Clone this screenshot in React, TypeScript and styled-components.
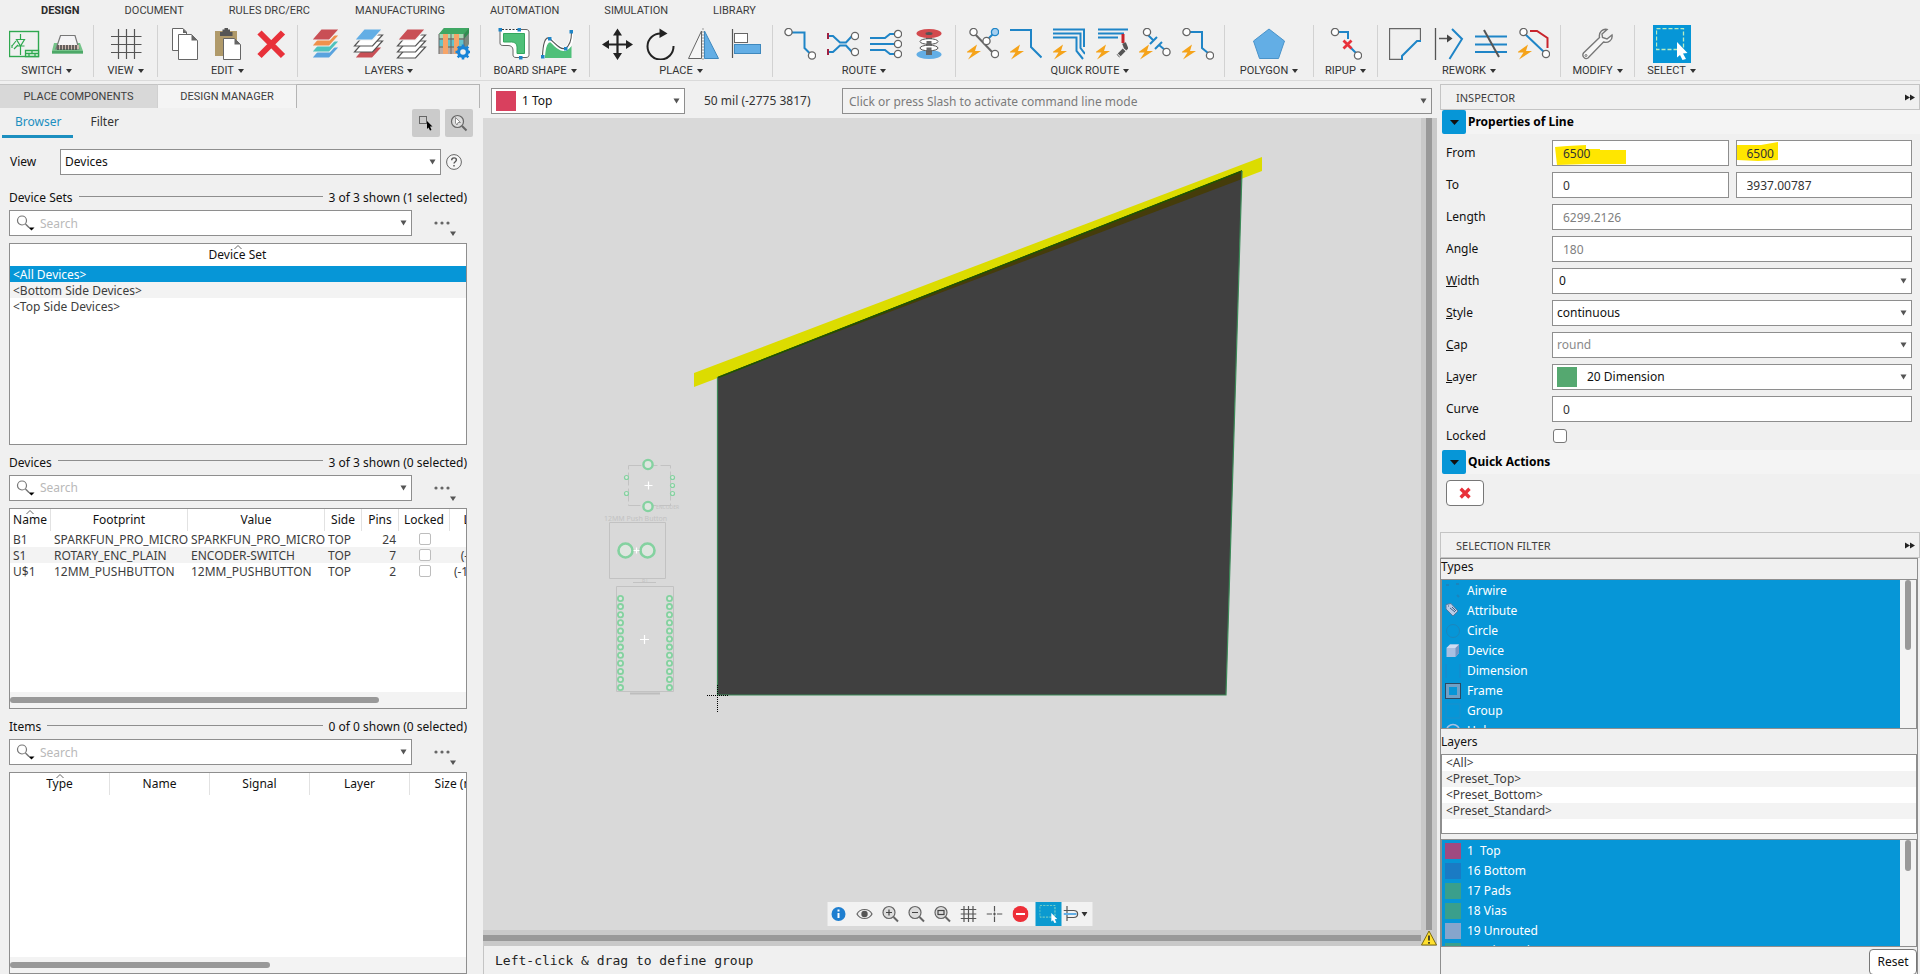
import React, { ReactNode } from "react";
import styled, { createGlobalStyle } from "styled-components";

const PANEL_FONT = '"Noto Sans", "Open Sans", sans-serif';
const CHROME_FONT = 'Roboto, "Liberation Sans", sans-serif';
const BLUE = "#0696d7";
const EDGE = "#8e8e8e";
const RULE = "#c4c4c4";
const TRACE = "#1f85c7";
const SKY = "#63aee5";
const GREEN = "#2fa84f";
const RED = "#e8313a";
const BOLT = "#f5a31a";
const PAPER = "#f0f0f0";

const GlobalStyle = createGlobalStyle`
  *, *::before, *::after { box-sizing: border-box; }
  body {
    margin: 0;
    background: ${PAPER};
    font: 12px/16px ${PANEL_FONT};
    color: #111;
  }
  button, input, select { font: inherit; color: inherit; }
  button { cursor: pointer; }
`;

/* ---------- page frame ---------- */

const Window = styled.div`
  display: flex;
  flex-direction: column;
  height: 100vh;
  overflow: hidden;
`;

const Workspace = styled.div`
  display: flex;
  flex: 1;
  min-height: 0;
  padding-top: 3px;
`;

/* ---------- menu and ribbon ---------- */

const MenuBar = styled.nav`
  display: flex;
  gap: 45px;
  height: 20px;
  padding: 2px 41px 0;
  align-items: center;
  font: 11px/14px ${CHROME_FONT};
`;

const MenuLink = styled.a<{ $active?: boolean }>`
  color: ${(p) => (p.$active ? "#2b2b2b" : "#3c3c3c")};
  font-weight: ${(p) => (p.$active ? 700 : 400)};
  text-decoration: none;
`;

const Ribbon = styled.div`
  display: flex;
  height: 61px;
  padding-top: 5px;
  border-bottom: 1px solid #dadada;
`;

const Group = styled.div<{ $width: number; $last?: boolean }>`
  display: flex;
  flex-direction: column;
  align-items: center;
  width: ${(p) => p.$width}px;
  height: 52px;
  border-right: 1px solid ${(p) => (p.$last ? "transparent" : "#d2d2d2")};
`;

const ToolRow = styled.div`
  display: flex;
  flex: none;
  gap: 11px;
  height: 38px;
  align-items: center;
`;

const ToolButton = styled.button`
  display: flex;
  width: 32px;
  height: 32px;
  padding: 0;
  border: 0;
  background: none;
`;

const SelectTool = styled(ToolButton)`
  width: 38px;
  height: 38px;
  background: ${BLUE};
  align-items: center;
  justify-content: center;
`;

const GroupMenu = styled.button`
  display: flex;
  flex: none;
  gap: 4px;
  align-items: center;
  padding: 1px 0 0;
  border: 0;
  background: none;
  color: #333;
  font: 11px/14px ${CHROME_FONT};
  white-space: nowrap;
`;

/* ---------- shared controls ---------- */

const Combo = styled.div<{ $fill?: string }>`
  position: relative;
  display: flex;
  flex: 1;
  align-items: center;
  height: 26px;
  min-width: 0;
  border: 1px solid ${EDGE};
  background: ${(p) => p.$fill ?? "#fff"};
`;

const ComboArrow = styled.svg`
  position: absolute;
  right: 4px;
  top: 9px;
  pointer-events: none;
`;

const BareSelect = styled.select<{ $pad?: number; $dim?: boolean }>`
  flex: 1;
  min-width: 0;
  height: 24px;
  padding: 0 16px 0 ${(p) => p.$pad ?? 4}px;
  border: 0;
  outline: 0;
  background: transparent;
  appearance: none;
  color: ${(p) => (p.$dim ? "#8a8a8a" : "#111")};
  opacity: 1;
`;

const BareInput = styled.input<{ $pad?: number; $dim?: boolean }>`
  position: relative;
  flex: 1;
  min-width: 0;
  height: 24px;
  padding: 0 4px 0 ${(p) => p.$pad ?? 10}px;
  border: 0;
  outline: 0;
  background: transparent;
  color: ${(p) => (p.$dim ? "#808080" : "#333")};
  &::placeholder { color: #b9b9b9; opacity: 1; }
`;

const CommandInput = styled(BareInput)`
  &::placeholder { color: #7b7b7b; }
`;

const Swatch = styled.span<{ $color: string; $size: number }>`
  flex: none;
  width: ${(p) => p.$size}px;
  height: ${(p) => p.$size}px;
  background: ${(p) => p.$color};
`;

const BoxSwatch = styled(Swatch)`
  margin-left: 4px;
`;

/* ---------- left panel ---------- */

const LeftPanel = styled.aside`
  display: flex;
  flex-direction: column;
  flex: none;
  width: 480px;
  min-height: 0;
`;

const DockTabs = styled.div`
  display: flex;
  flex: none;
  height: 24px;
`;

const DockTab = styled.button<{ $active?: boolean; $width: number }>`
  width: ${(p) => p.$width}px;
  padding: 0;
  border: 0;
  border-top: 1px solid ${RULE};
  border-right: 1px solid ${(p) => (p.$active ? "#b4b4b4" : "#d0d0d0")};
  background: ${(p) => (p.$active ? "#f4f4f4" : "#d8d8d8")};
  font: 11px/16px ${CHROME_FONT};
  color: #3e3e3e;
`;

const DockTail = styled.div`
  flex: 1;
  border-top: 1px solid #b4b4b4;
  border-right: 1px solid #b4b4b4;
`;

const SubTabs = styled.div`
  display: flex;
  flex: none;
  height: 30px;
  padding: 0 7px 0 2px;
  align-items: flex-start;
`;

const SubTab = styled.button<{ $active?: boolean }>`
  height: 30px;
  padding: 0 12px 0 13px;
  border: 0;
  border-bottom: 3px solid ${(p) => (p.$active ? "#1c8fc0" : "transparent")};
  background: none;
  color: ${(p) => (p.$active ? "#1c8fc0" : "#333")};
  & + & { margin-left: 4px; }
`;

const Spacer = styled.div`
  flex: 1;
`;

const SquareButton = styled.button`
  display: flex;
  align-items: center;
  justify-content: center;
  width: 28px;
  height: 28px;
  margin: 1px 0 0 5px;
  padding: 0;
  border: 0;
  border-radius: 2px;
  background: #cbcbcb;
`;

const ViewRow = styled.div`
  display: flex;
  flex: none;
  align-items: center;
  gap: 5px;
  height: 26px;
  margin: 11px 18px 5px 10px;
`;

const ViewLabel = styled.label`
  width: 45px;
`;

const HelpButton = styled.button`
  display: flex;
  padding: 0;
  border: 0;
  background: none;
`;

const Section = styled.section`
  display: flex;
  flex: 1;
  flex-direction: column;
  min-height: 0;
  padding: 10px 13px 0 9px;
`;

const SectionHead = styled.div`
  display: flex;
  flex: none;
  align-items: center;
  gap: 6px;
  height: 16px;
  margin: 0 0 4px;
`;

const SectionTitle = styled.h2`
  margin: 0;
  font-size: 12px;
  line-height: 16px;
  font-weight: 400;
`;

const HeadLine = styled.div`
  flex: 1;
  height: 1px;
  margin-bottom: 4px;
  background: ${EDGE};
`;

const SearchRow = styled.div`
  display: flex;
  flex: none;
  height: 26px;
  margin-bottom: 7px;
`;

const SearchIcon = styled.svg`
  flex: none;
  margin-left: 6px;
`;

const MoreButton = styled.button`
  display: flex;
  flex: none;
  width: 55px;
  padding: 0 0 0 20px;
  border: 0;
  background: none;
`;

const TableFrame = styled.div`
  display: flex;
  flex: 1;
  flex-direction: column;
  min-height: 0;
  overflow: hidden;
  border: 1px solid ${EDGE};
  background: #fff;
`;

const TableBody = styled.div`
  flex: 1;
  min-height: 0;
  overflow: hidden;
`;

const Table = styled.table<{ $width?: string }>`
  width: ${(p) => p.$width ?? "100%"};
  table-layout: fixed;
  border-collapse: separate;
  border-spacing: 0;
`;

const Th = styled.th<{ $divider?: boolean }>`
  position: relative;
  height: 22px;
  padding: 2px 0;
  border-right: 1px solid ${(p) => (p.$divider ? "#e2e2e2" : "transparent")};
  font-weight: 400;
  line-height: 18px;
  text-align: center;
  white-space: nowrap;
  overflow: hidden;
`;

const SortMark = styled.svg`
  position: absolute;
  top: 0;
  left: calc(50% - 4px);
`;

const Tr = styled.tr<{ $tone?: "selected" | "alt" }>`
  background: ${(p) => (p.$tone === "selected" ? BLUE : p.$tone === "alt" ? "#f3f3f3" : "#fff")};
  color: ${(p) => (p.$tone === "selected" ? "#fff" : "#3d3d3d")};
`;

const Td = styled.td<{ $align?: "right" | "center" }>`
  height: 16px;
  padding: 1px ${(p) => (p.$align === "right" ? 3 : 0)}px 0 ${(p) => (p.$align ? 0 : 3)}px;
  line-height: 15px;
  text-align: ${(p) => p.$align ?? "left"};
  white-space: nowrap;
  overflow: hidden;
`;

const TinyCheck = styled.input`
  display: block;
  width: 12px;
  height: 12px;
  margin: 1px auto 2px;
  border: 1px solid #bdbdbd;
  border-radius: 2px;
  background: #fff;
  appearance: none;
`;

const ScrollTrack = styled.div`
  flex: none;
  height: 16px;
  padding-top: 5px;
  background: #f3f3f3;
`;

const ScrollThumb = styled.div<{ $share: number }>`
  width: ${(p) => p.$share}%;
  height: 6px;
  border-radius: 3px;
  background: #999;
`;

/* ---------- center ---------- */

const Center = styled.main`
  display: flex;
  flex: 1;
  flex-direction: column;
  min-width: 0;
  margin-left: 3px;
`;

const CommandBar = styled.div`
  display: flex;
  flex: none;
  height: 34px;
  padding: 4px 5px 0 8px;
`;

const LayerPicker = styled.div`
  display: flex;
  width: 194px;
`;

const Coordinates = styled.output`
  width: 157px;
  padding-left: 19px;
  color: #333;
  line-height: 26px;
  white-space: nowrap;
`;

const CanvasGrid = styled.div`
  position: relative;
  display: grid;
  flex: 1;
  grid-template-columns: 1fr 16px;
  grid-template-rows: 1fr 16px;
  min-height: 0;
`;

const BoardCanvas = styled.svg`
  display: block;
  width: 100%;
  height: 100%;
  background: #d9d9d9;
`;

const VerticalBar = styled.div`
  padding: 0 5px;
  background: #c9c9c9;
`;

const HorizontalBar = styled.div`
  padding: 5px 0;
  background: #c9c9c9;
`;

const BarThumb = styled.div`
  height: 100%;
  background: #999;
`;

const WarningButton = styled.button`
  display: flex;
  padding: 0;
  border: 0;
  background: #c9c9c9;
`;

const FloatingTools = styled.div`
  position: absolute;
  left: 50%;
  bottom: 20px;
  display: flex;
  height: 24px;
  background: #f2f2f2;
  transform: translateX(-50%);
`;

const FloatButton = styled.button<{ $active?: boolean; $wide?: boolean }>`
  display: flex;
  align-items: center;
  justify-content: center;
  width: ${(p) => (p.$wide ? 31 : 26)}px;
  height: 24px;
  padding: 0 ${(p) => (p.$active ? 0 : 4)}px 0 0;
  border: 0;
  background: ${(p) => (p.$active ? "#0b9ad0" : "none")};
`;

const StatusBar = styled.footer`
  flex: none;
  height: 28px;
  padding: 7px 11px 5px;
  border-left: 1px solid ${RULE};
  color: #222;
  font: 13px/16px "DejaVu Sans Mono", "Liberation Mono", monospace;
`;

/* ---------- right panel ---------- */

const RightPanel = styled.aside`
  display: flex;
  flex: none;
  flex-direction: column;
  width: 483px;
  min-height: 0;
  padding-left: 3px;
`;

const PanelHead = styled.header`
  display: flex;
  flex: none;
  align-items: center;
  justify-content: space-between;
  height: 26px;
  padding: 2px 4px 0 15px;
  border: 1px solid ${RULE};
`;

const PanelTitle = styled.h2`
  margin: 0;
  font: 11px/16px ${PANEL_FONT};
  color: #3e3e3e;
`;

const CollapseButton = styled.button`
  display: flex;
  padding: 0 0 2px;
  border: 0;
  background: none;
`;

const Inspector = styled.div`
  display: flex;
  flex: none;
  flex-direction: column;
  height: 422px;
`;

const FoldHead = styled.div`
  display: flex;
  flex: none;
  align-items: center;
  gap: 2px;
  height: 24px;
  margin-left: 2px;
  background: #f4f4f4;
`;

const FoldButton = styled.button`
  display: flex;
  align-items: center;
  justify-content: center;
  width: 24px;
  height: 24px;
  padding: 0;
  border: 0;
  border-radius: 2px;
  background: ${BLUE};
`;

const FoldTitle = styled.h3`
  margin: 0;
  font-size: 12px;
  line-height: 16px;
  font-weight: 700;
  color: #000;
`;

const Form = styled.form`
  display: flex;
  flex-direction: column;
  gap: 6px;
  padding: 6px 8px 0 6px;
`;

const Field = styled.div`
  display: flex;
  align-items: center;
  gap: 7px;
  height: 26px;
`;

const CheckField = styled(Field)`
  height: 16px;
  margin-bottom: 6px;
`;

const FieldLabel = styled.label`
  width: 99px;
`;

const CheckBox = styled.input`
  width: 14px;
  height: 14px;
  margin: 0 0 0 1px;
  border: 1px solid #777;
  border-radius: 3px;
  background: #fff;
  appearance: none;
`;

const Marker = styled.svg`
  position: absolute;
  left: 0;
  top: 0;
  pointer-events: none;
`;

const DeleteAction = styled.button`
  display: flex;
  align-items: center;
  justify-content: center;
  width: 38px;
  height: 26px;
  margin: 6px 0 0 6px;
  padding: 0 1px 1px 0;
  border: 1px solid #777;
  border-radius: 4px;
  background: #fff;
`;

const FilterBody = styled.div`
  display: flex;
  flex: 1;
  flex-direction: column;
  min-height: 0;
  margin-right: 2px;
  border: 1px solid ${EDGE};
  border-bottom: 0;
`;

const ListLabel = styled.h3<{ $tall?: boolean }>`
  flex: none;
  height: ${(p) => (p.$tall ? 25 : 20)}px;
  margin: 0;
  padding-top: ${(p) => (p.$tall ? 5 : 0)}px;
  font-size: 12px;
  line-height: 16px;
  font-weight: 400;
`;

const ListFrame = styled.div<{ $height: number }>`
  display: flex;
  flex: none;
  height: ${(p) => p.$height}px;
  border: 1px solid ${EDGE};
  background: #fff;
  overflow: hidden;
  & + & { margin-top: 5px; }
`;

const BlueList = styled.ul`
  flex: 1;
  margin: 0;
  padding: 1px 0 0 3px;
  background: ${BLUE};
  list-style: none;
  color: #fff;
`;

const BlueItem = styled.li`
  display: flex;
  align-items: center;
  gap: 6px;
  height: 20px;
`;

const ListScroll = styled.div`
  width: 16px;
  padding: 0 5px;
  background: #f3f3f3;
`;

const ListThumb = styled.div<{ $share: number }>`
  width: 6px;
  height: ${(p) => p.$share}%;
  border-radius: 3px;
  background: #999;
`;

const PresetList = styled.ul`
  flex: 1;
  margin: 0;
  padding: 0;
  list-style: none;
  color: #3d3d3d;
`;

const PresetItem = styled.li`
  height: 16px;
  padding-left: 4px;
  &:nth-child(even) { background: #f3f3f3; }
`;

const FilterFoot = styled.div`
  display: flex;
  flex: none;
  justify-content: flex-end;
  padding-top: 2px;
`;

const ResetButton = styled.button`
  width: 48px;
  height: 26px;
  padding: 0;
  border: 1px solid #777;
  border-radius: 4px;
  background: #fff;
`;

/* ---------- drawings ---------- */

const Icon = ({ children, size = 32, box = 32 }: { children: ReactNode; size?: number; box?: number }) => (
  <svg width={size} height={size} viewBox={`0 0 ${box} ${box}`} fill="none" aria-hidden="true">
    {children}
  </svg>
);

const Caret = ({ w = 6, h = 5, color = "#333" }: { w?: number; h?: number; color?: string }) => (
  <svg width={w} height={h} viewBox="0 0 6 5" preserveAspectRatio="none" aria-hidden="true">
    <path d="M0 0H6L3 5Z" fill={color} />
  </svg>
);

const Drop = () => (
  <ComboArrow width="7" height="6" viewBox="0 0 7 6" aria-hidden="true">
    <path d="M0.5 0.5H6.5L3.5 5.5Z" fill="#555" />
  </ComboArrow>
);

const Bolt = () => <path d="M10 16.500L-1 24.500H5.500L1 31.500L14 23H8Z" fill={BOLT} />;

const Ring = ({ x, y, fill = "#fff" }: { x: number; y: number; fill?: string }) => (
  <circle cx={x} cy={y} r="3.6" fill={fill} stroke="#666" strokeWidth="1.3" />
);

const Sheet = ({ y, color, line = PAPER }: { y: number; color: string; line?: string }) => (
  <path d={`M12 ${y}H30.500L20.500 ${y + 11}H2.500Z`} fill={color} stroke={line} strokeWidth="1.2" />
);

const SchematicIcon = () => (
  <Icon>
    <rect x="0.5" y="3.500" width="29" height="25" stroke={GREEN} strokeWidth="1.4" />
    <path d="M11.500 6V11M11.500 18V27M7.500 11.500H15.500L11.500 18ZM7.500 18H15.500M3 18L7 13M3 20V17M5 21L9 17" stroke={GREEN} strokeWidth="1.2" />
    <path d="M16.500 22.500H29.500V28.500H16.500ZM16.500 25.500H29.500M23 22.500V25.500M20 25.500V28.500M26 25.500V28.500" stroke={GREEN} strokeWidth="1.3" fill="#e6f6ea" />
  </Icon>
);

const Board3dIcon = () => (
  <Icon>
    <path d="M2 15L0 23V25.500H31V23L28 15Z" fill="#76c48a" />
    <path d="M0 23H31V25.500H0Z" fill="#4da868" />
    <path d="M8.500 7.500H23L27 21H4Z" fill="#f4f4f6" stroke="#777" strokeWidth="1.2" />
    <path d="M5 17H27V21H5Z" fill="#cbb7ae" />
    <path d="M6 17V22M9 17V22M12 17V22M15 17V22M18 17V22M21 17V22M24 17V22" stroke="#444" strokeWidth="1.5" />
  </Icon>
);

const GridIcon = () => (
  <Icon>
    <path d="M8.500 1V31M16.500 1V31M24.500 1V31M1 8.500H31.500M1 16.500H31.500M1 24.500H31.500" stroke="#555" strokeWidth="1.2" />
  </Icon>
);

const CopyIcon = () => (
  <Icon>
    <path d="M3.500 0.500H14L17.500 4V22.500H3.500Z" fill="#fff" stroke="#666" />
    <path d="M14 0.500L18 5H14Z" fill="#666" />
    <path d="M9.500 6.500H22.500L28.500 12.500V31.500H9.500Z" fill="#fff" stroke="#666" />
    <path d="M22.500 6.500L28.500 12.500H22.500Z" fill="#666" />
  </Icon>
);

const PasteIcon = () => (
  <Icon>
    <path d="M3 3H25V28H3Z" fill="#b09a6a" />
    <path d="M8 4H10.500V1.500H12.500V0H16V1.500H18V4H20.500V8H8Z" fill="#555" />
    <path d="M11.500 10.500H22.500L28.500 16.500V31.500H11.500Z" fill="#fff" stroke="#666" />
    <path d="M22.500 10.500L28.500 16.500H22.500Z" fill="#666" />
  </Icon>
);

const DeleteIcon = ({ size = 32, weight = 6 }: { size?: number; weight?: number }) => (
  <Icon size={size}>
    <path d="M4.500 4.500L28 28M28 4.500L4.500 28" stroke={RED} strokeWidth={weight} />
  </Icon>
);

const LayersIcon = ({ colors }: { colors: string[] }) => (
  <Icon>
    {[...colors].reverse().map((c, i) => (
      <Sheet key={i} y={1 + (3 - i) * 6} color={c} line={c === "#fff" ? "#555" : PAPER} />
    ))}
  </Icon>
);

const LayerSetupIcon = () => (
  <Icon>
    <path d="M1 6L6 0H31V16L26 26H1Z" fill="#7c8a80" />
    <path d="M1 6L6 0H31L26 6Z" fill="#3fa763" />
    <path d="M1 6H26V10H1Z" fill="#a9d9b4" />
    <path d="M1 12H26V18H1Z" fill="#62c3cd" />
    <path d="M1 20H26V26H1Z" fill="#b9aaa3" />
    <path d="M26 6L31 0V5L26 11Z" fill="#2f8f4f" />
    <path d="M5 6H10V26H5ZM16 6H21V26H16Z" fill="#f7a467" />
    <path d="M1 6V26M13 6V26M26 6V18" stroke="#666" />
    <circle cx="25" cy="24" r="6" fill="#1784d8" />
    <path d="M25 16.500V31.500M17.500 24H32M19.700 18.700L30.300 29.300M30.300 18.700L19.700 29.300" stroke="#1784d8" strokeWidth="2.600" />
    <circle cx="25" cy="24" r="2.800" fill={PAPER} />
  </Icon>
);

const BoardOutlineIcon = () => (
  <Icon>
    <path d="M2 2V15C2 17 3 17.500 6 17.500H10C13 17.500 15 19 15 22V27C15 28.500 16 29.500 18 29.500H28C30 29.500 31 28.500 31 26.500V4C31 2.500 30 1.500 28 1.500H2Z" fill="#fff" />
    <path d="M2 2V15C2 17 3 17.500 6 17.500H10C13 17.500 15 19 15 22V27C15 28.500 16 29.500 18 29.500H28C30 29.500 31 28.500 31 26.500V4C31 2.500 30 1.500 28 1.500H22" stroke="#666" />
    <path d="M4 1.500H20" stroke="#333" strokeDasharray="2 1.500" />
    <path d="M5.500 5.500H26.500V25.500H19V19C19 16 17 14 13.500 14H5.500Z" fill="#4fc079" stroke="#33a65d" />
    <path d="M0.500 0H4V3.500H0.500ZM19.500 0H23V3.500H19.500ZM21 28H24.500V31.500H21Z" fill={TRACE} />
  </Icon>
);

const BoardCurveIcon = () => (
  <Icon>
    <path d="M4 30V22C6 15 9 13 12 15C15 18 18 22 23 22.500C26 22.500 28 21 30.500 18V30Z" fill="#4fc079" />
    <path d="M2 28C3 16 6 10 9 11C14 16 19 22 24 21C29 19 31 12 31 4" stroke="#fff" strokeWidth="4" />
    <path d="M1.500 28C2 16 4 9 8 10C14 15 19 22 24 20.500C29 18 30.500 12 30.500 4" stroke="#555" strokeWidth="1.100" />
    <path d="M0 27H3.500V30.500H0ZM7 9H10.500V12.500H7ZM23 19H26.500V22.500H23ZM28.500 2H32V5.500H28.500Z" fill={TRACE} />
  </Icon>
);

const MoveIcon = () => (
  <Icon>
    <path d="M16.500 5V28M5 16.500H28" stroke="#222" strokeWidth="2.200" />
    <path d="M16.500 0.500L21 7.500H12ZM16.500 32L21 25H12ZM1 16.500L8 12V21ZM32 16.500L25 12V21Z" fill="#222" />
  </Icon>
);

const RotateIcon = () => (
  <Icon>
    <path d="M17 5.500A13 13 0 1 0 29.500 18" stroke="#222" strokeWidth="2" />
    <path d="M15.500 0.500V10L23.500 5.500Z" fill="#222" />
  </Icon>
);

const MirrorIcon = () => (
  <Icon>
    <path d="M14.500 3V30.500H1.500Z" stroke="#666" fill="#f6f6f6" />
    <path d="M17.500 3V30.500H31.500Z" stroke="#3f88bd" fill={SKY} />
    <path d="M16 0V32" stroke="#999" strokeDasharray="2 1" />
  </Icon>
);

const AlignIcon = () => (
  <Icon>
    <path d="M2.500 1V30" stroke="#555" strokeWidth="1.200" />
    <rect x="4.500" y="5.500" width="13" height="9" fill="#fff" stroke="#666" />
    <rect x="4.500" y="16.500" width="26" height="9" fill={SKY} stroke="#3f88bd" />
  </Icon>
);

const RouteIcon = () => (
  <Icon>
    <path d="M8 4.500H20.500V20L26 25.500" stroke={TRACE} strokeWidth="2" />
    <Ring x={4.5} y={4} />
    <Ring x={28} y={27.500} />
  </Icon>
);

const DiffPairIcon = () => (
  <Icon>
    <path d="M1 8H6L13 14.500H19L25 8M1 24H6L13 17.500H19L25 24" stroke={TRACE} strokeWidth="2" />
    <path d="M1 5V11M1 21V27" stroke="#a02040" strokeWidth="2" />
    <Ring x={28} y={8} />
    <Ring x={28} y={24} />
  </Icon>
);

const MultiRouteIcon = () => (
  <Icon>
    <path d="M0 10H15L20 6H25M0 16H25M0 22H15L20 26H25" stroke={TRACE} strokeWidth="2" />
    <Ring x={28} y={6} />
    <Ring x={28} y={16} />
    <Ring x={28} y={26} />
  </Icon>
);

const ViaIcon = () => (
  <Icon>
    <ellipse cx="16" cy="26.500" rx="12.500" ry="4.500" fill={SKY} />
    <path d="M13 6H19V27H13Z" fill="#666" />
    <ellipse cx="16" cy="20" rx="9" ry="2.800" fill="#fff" stroke="#555" />
    <ellipse cx="16" cy="13.500" rx="9" ry="2.800" fill="#fff" stroke="#555" />
    <path d="M13.500 13V16.500H18.500V13ZM13.500 19.500V23H18.500V19.500Z" fill="#666" />
    <ellipse cx="16" cy="5.500" rx="12.500" ry="4.500" fill="#d24a4e" />
    <ellipse cx="16" cy="5.500" rx="3.500" ry="1.500" fill="#555" />
  </Icon>
);

const QuickAirwireIcon = () => (
  <Icon>
    <path d="M6 4L27 26" stroke="#666" strokeWidth="2" />
    <path d="M19 13L28 4" stroke={TRACE} strokeWidth="2" />
    <Ring x={6.500} y={4} />
    <circle cx="28" cy="4" r="3.600" fill="#a5cff0" stroke={TRACE} strokeWidth="1.300" />
    <Ring x={19.500} y={13} />
    <Ring x={28} y={26} />
    <Bolt />
  </Icon>
);

const QuickLineIcon = () => (
  <Icon>
    <path d="M0 2H21V19L31.500 29.500" stroke={TRACE} strokeWidth="2" />
    <Bolt />
  </Icon>
);

const QuickBusIcon = () => (
  <Icon>
    <path d="M0 1.500H31V19M0 5.500H27.500V20L32 26M0 9.500H23.500V23L30 31" stroke={TRACE} strokeWidth="2" />
    <Bolt />
  </Icon>
);

const QuickSmartIcon = () => (
  <Icon>
    <path d="M2 1.500H32M2 5.500H28M2 9.500H22" stroke={TRACE} strokeWidth="2" />
    <path d="M27 6V15" stroke="#c8242c" strokeWidth="3" />
    <path d="M28 15L30 20L22 28" stroke="#555" strokeWidth="4" strokeDasharray="7 1" />
    <Bolt />
  </Icon>
);

const QuickPartIcon = () => (
  <Icon>
    <path d="M8 6L15 13M20 17L26 22M11 16L18 9M16 21L23 14" stroke={TRACE} strokeWidth="2" />
    <Ring x={8} y={4} />
    <Ring x={27.500} y={24} />
    <Bolt />
  </Icon>
);

const QuickRouteIcon = () => (
  <Icon>
    <path d="M8 4H20V20L26 25" stroke={TRACE} strokeWidth="2" />
    <Ring x={4.500} y={4} />
    <Ring x={28} y={27.500} />
    <Bolt />
  </Icon>
);

const PolygonIcon = () => (
  <Icon>
    <path d="M16 1L31.500 13L25.500 30.500H6.500L0.500 13Z" fill={SKY} stroke="#4a93c9" />
  </Icon>
);

const RipupIcon = () => (
  <Icon>
    <path d="M8 4H18V11M21 20L26 25" stroke={TRACE} strokeWidth="2" />
    <Ring x={5} y={4} />
    <Ring x={28} y={27.500} />
    <path d="M13.500 12.500L21.500 20.500M21.500 12.500L13.500 20.500" stroke={RED} strokeWidth="2.800" />
  </Icon>
);

const MiterIcon = () => (
  <Icon>
    <path d="M12 31.500H0.500V0.500H31.500V12" stroke="#666" strokeWidth="1.300" />
    <path d="M13 32V28L28 13H32" stroke={TRACE} strokeWidth="2" />
  </Icon>
);

const SplitIcon = () => (
  <Icon>
    <path d="M3.500 0V32M7 10.500H16" stroke="#555" strokeWidth="1.300" />
    <path d="M15 6.500L20.500 10.500L15 14.500Z" fill="#444" />
    <path d="M20 1L30 11L17.500 31" stroke={TRACE} strokeWidth="2" />
  </Icon>
);

const SlideIcon = () => (
  <Icon>
    <path d="M0 8.500H32M0 16.500H32M0 24H32" stroke={TRACE} strokeWidth="2" />
    <path d="M9 2L24 29" stroke="#555" strokeWidth="2" />
  </Icon>
);

const OptimizeIcon = () => (
  <Icon>
    <path d="M12 3H19L29.500 10V20" stroke="#c8242c" strokeWidth="2" />
    <path d="M7 6L26 24" stroke={TRACE} strokeWidth="2" />
    <Ring x={5.500} y={4} />
    <Ring x={28} y={26} />
    <Bolt />
  </Icon>
);

const WrenchIcon = () => (
  <Icon>
    <path d="M25 1.500C21 0.500 16.500 4 17.500 9.500L1.500 25C-0.500 28 3 32 6 30L21.500 14C26 15.500 31 12 30 7L25 11L20.500 9.500L20 6Z" fill="#f6f6f6" stroke="#777" strokeWidth="1.400" />
    <circle cx="4" cy="27.500" r="1" stroke="#777" />
  </Icon>
);

const MarqueeIcon = ({ size = 32 }: { size?: number }) => (
  <Icon size={size}>
    <rect x="0.500" y="0.500" width="27" height="21" stroke="#b9ecc0" strokeWidth="1.300" strokeDasharray="4 2" />
    <path d="M21 14L31.500 25L27 25.500L30 31L26.500 32L24 27L21 29.500Z" fill="#fff" />
  </Icon>
);

const Lens = ({ children }: { children?: ReactNode }) => (
  <Icon size={18} box={18}>
    <circle cx="7.500" cy="7.500" r="6" fill="#dcdcdc" stroke="#666" strokeWidth="1.200" />
    <path d="M12 12L16.500 16.500" stroke="#666" strokeWidth="2" />
    {children}
  </Icon>
);

/* ---------- data ---------- */

const menus = ["DESIGN", "DOCUMENT", "RULES DRC/ERC", "MANUFACTURING", "AUTOMATION", "SIMULATION", "LIBRARY"];

const groups: { label: string; width: number; tools: [string, ReactNode][] }[] = [
  { label: "SWITCH", width: 94, tools: [["Schematic", <SchematicIcon />], ["3D board", <Board3dIcon />]] },
  { label: "VIEW", width: 64, tools: [["Grid", <GridIcon />]] },
  { label: "EDIT", width: 140, tools: [["Copy", <CopyIcon />], ["Paste", <PasteIcon />], ["Delete", <DeleteIcon />]] },
  {
    label: "LAYERS",
    width: 183,
    tools: [
      ["All layers", <LayersIcon colors={["#c94f55", "#f0914c", "#4fc3bd", "#5aa3de"]} />],
      ["Bottom layers", <LayersIcon colors={["#63aee5", "#fff", "#fff", "#c94f55"]} />],
      ["Top layers", <LayersIcon colors={["#c94f55", "#fff", "#fff", "#fff"]} />],
      ["Layer settings", <LayerSetupIcon />],
    ],
  },
  { label: "BOARD SHAPE", width: 109, tools: [["Outline", <BoardOutlineIcon />], ["Outline spline", <BoardCurveIcon />]] },
  {
    label: "PLACE",
    width: 183,
    tools: [["Move", <MoveIcon />], ["Rotate", <RotateIcon />], ["Mirror", <MirrorIcon />], ["Align", <AlignIcon />]],
  },
  {
    label: "ROUTE",
    width: 183,
    tools: [["Route", <RouteIcon />], ["Differential pair", <DiffPairIcon />], ["Route multiple", <MultiRouteIcon />], ["Via", <ViaIcon />]],
  },
  {
    label: "QUICK ROUTE",
    width: 269,
    tools: [
      ["Airwire", <QuickAirwireIcon />],
      ["Signal", <QuickLineIcon />],
      ["Bus", <QuickBusIcon />],
      ["Smart", <QuickSmartIcon />],
      ["Part", <QuickPartIcon />],
      ["Quick", <QuickRouteIcon />],
    ],
  },
  { label: "POLYGON", width: 89, tools: [["Polygon", <PolygonIcon />]] },
  { label: "RIPUP", width: 64, tools: [["Ripup", <RipupIcon />]] },
  {
    label: "REWORK",
    width: 183,
    tools: [["Miter", <MiterIcon />], ["Split", <SplitIcon />], ["Slide", <SlideIcon />], ["Optimize", <OptimizeIcon />]],
  },
  { label: "MODIFY", width: 74, tools: [["Modify", <WrenchIcon />]] },
];

const deviceSets = ["<All Devices>", "<Bottom Side Devices>", "<Top Side Devices>"];

const devices = [
  { name: "B1", footprint: "SPARKFUN_PRO_MICRO", value: "SPARKFUN_PRO_MICRO", side: "TOP", pins: 24, location: "" },
  { name: "S1", footprint: "ROTARY_ENC_PLAIN", value: "ENCODER-SWITCH", side: "TOP", pins: 7, location: "(-950 4050)" },
  { name: "U$1", footprint: "12MM_PUSHBUTTON", value: "12MM_PUSHBUTTON", side: "TOP", pins: 2, location: "(-1050 2800)" },
];

const presets = ["<All>", "<Preset_Top>", "<Preset_Bottom>", "<Preset_Standard>"];

const layers: [string, string][] = [
  ["1\u00a0 Top", "#a04a80"],
  ["16 Bottom", "#1a7bc4"],
  ["17 Pads", "#3a9f8c"],
  ["18 Vias", "#3a9f8c"],
  ["19 Unrouted", "#86a5cc"],
  ["20 Dimension", "#3a9f8c"],
];

const types: [string, ReactNode][] = [
  ["Airwire", <path d="M1 2H4M11 1H14M12 12L14 14" stroke="#1b84bd" strokeWidth="2" />],
  [
    "Attribute",
    <>
      <path d="M1 1.500L6 0.500L13 8L8 13L1 6Z" fill="#b9cbe6" stroke="#54789c" />
      <path d="M3 3H4M5 5L10 9M7 4L11 8" stroke="#3e6287" />
    </>,
  ],
  ["Circle", <circle cx="8" cy="8" r="6.500" stroke="#1c86bd" />],
  [
    "Device",
    <>
      <path d="M1.500 5L5 1.500H14V10L10.500 14H1.500Z" fill="#a9c0e2" />
      <path d="M1.500 5L5 1.500H14L10.500 5Z" fill="#cfdcf2" />
      <path d="M14 1.500V10L10.500 14V5Z" fill="#7896c4" />
    </>,
  ],
  ["Dimension", <path d="M1 1V15M15 1V15" stroke="#1c86c8" />],
  [
    "Frame",
    <>
      <rect x="0.500" y="0.500" width="15" height="15" stroke="#2d4a63" fill="#6fa0c6" />
      <rect x="4" y="4" width="8" height="8" fill={BLUE} />
    </>,
  ],
  ["Group", <path d="M1 1H15V15H1Z" stroke="#1a8fcb" />],
  ["Hole", <circle cx="8" cy="8" r="6.500" stroke="#a9c0e2" strokeWidth="1.500" />],
];

/* ---------- parts ---------- */

const ListSection = ({ title, summary, children }: { title: string; summary: string; children: ReactNode }) => (
  <Section>
    <SectionHead>
      <SectionTitle>{title}</SectionTitle>
      <HeadLine />
      <span>{summary}</span>
    </SectionHead>
    <SearchRow>
      <Combo>
        <SearchIcon width="22" height="22" viewBox="0 0 22 22" fill="none" aria-hidden="true">
          <circle cx="6" cy="8.500" r="4.500" stroke="#777" strokeWidth="1.200" />
          <path d="M9.500 12L13 15.500" stroke="#777" strokeWidth="1.500" />
          <path d="M12.500 15.500H18.500L15.500 18.500Z" fill="#000" />
        </SearchIcon>
        <BareInput $pad={2} placeholder="Search" aria-label={`Search ${title}`} />
        <Drop />
      </Combo>
      <MoreButton type="button" aria-label={`${title} options`}>
        <svg width="26" height="26" viewBox="0 0 26 26" aria-hidden="true">
          <circle cx="4" cy="13" r="1.600" fill="#666" />
          <circle cx="10" cy="13" r="1.600" fill="#666" />
          <circle cx="16" cy="13" r="1.600" fill="#666" />
          <path d="M18 21.500H24L21 26Z" fill="#555" />
        </svg>
      </MoreButton>
    </SearchRow>
    <TableFrame>{children}</TableFrame>
  </Section>
);

const Sorted = () => (
  <SortMark width="8" height="6" viewBox="0 0 8 6" fill="none" aria-hidden="true">
    <path d="M0.500 5L4 1.500L7.500 5" stroke="#666" />
  </SortMark>
);

const Fold = ({ title }: { title: string }) => (
  <FoldHead>
    <FoldButton type="button" aria-label={`Toggle ${title}`}>
      <Caret w={9} h={5} color="#111" />
    </FoldButton>
    <FoldTitle>{title}</FoldTitle>
  </FoldHead>
);

const PanelBar = ({ title }: { title: string }) => (
  <PanelHead>
    <PanelTitle>{title}</PanelTitle>
    <CollapseButton type="button" aria-label={`Collapse ${title.toLowerCase()}`}>
      <svg width="10" height="7" viewBox="0 0 10 7" aria-hidden="true">
        <path d="M0 0.500L5 3.500L0 6.500ZM5 0.500L10 3.500L5 6.500Z" fill="#222" />
      </svg>
    </CollapseButton>
  </PanelHead>
);

const Pad = ({ x, y, r = 2.6, w = 1.8 }: { x: number; y: number; r?: number; w?: number }) => (
  <circle cx={x} cy={y} r={r} fill="#dfe6e0" stroke="#84d2a0" strokeWidth={w} />
);

const Cross = ({ x, y, r }: { x: number; y: number; r: number }) => (
  <path d={`M${x - r} ${y}H${x + r}M${x} ${y - r}V${y + r}`} stroke="#fff" strokeWidth="1.2" />
);

const BoardDrawing = () => (
  <BoardCanvas role="img" aria-label="Board layout">
    <path d="M211 255L779 39V53L211 269Z" fill="#dcdc00" />
    <path d="M234.500 259L759 52.500L743 577H234.500Z" fill="#404040" />
    <path d="M234.500 259L759 52.500V61Z" fill="#453c0a" />
    <path d="M235 259.500L759 53" stroke="#1f5500" strokeWidth="1.500" />
    <path d="M759 53L743 577H234.500V259" stroke="#3c8a58" strokeWidth="1.200" fill="none" />
    <g fill="none" stroke="#c2c2c2" strokeWidth="1">
      <path d="M145.500 347.500H187.500V387.500H145.500Z" strokeDasharray="13 3" />
      <path d="M126.500 404.500H182.500V460.500H126.500Z" />
      <path d="M133.500 468.500H190.500V573.500H133.500ZM150 464.500H173" />
    </g>
    <g fill="#c2c2c2" fontFamily="Noto Sans, sans-serif">
      <text x="121" y="403" fontSize="7">12MM Push Button</text>
      <text x="173" y="391" fontSize="5">ENCODER</text>
      <text x="159" y="464" fontSize="5">B1</text>
    </g>
    <path d="M147 575.500H177" stroke="#bdbdbd" strokeWidth="2" />
    <Pad x={165} y={346.500} r={4.600} w={2.400} />
    <Pad x={165} y={388.500} r={4.600} w={2.400} />
    <Pad x={143.500} y={359.500} r={2} w={1.200} />
    <Pad x={143.500} y={375.500} r={2} w={1.200} />
    <Pad x={189.500} y={359.500} r={2} w={1.200} />
    <Pad x={189.500} y={367.500} r={2} w={1.200} />
    <Pad x={189.500} y={375.500} r={2} w={1.200} />
    <Cross x={165.500} y={367.500} r={4} />
    <Pad x={142.500} y={432.500} r={7} w={2.600} />
    <Pad x={164.500} y={432.500} r={7} w={2.600} />
    <Cross x={153.500} y={432.500} r={3} />
    {Array.from({ length: 12 }, (_, i) => (
      <g key={i}>
        <Pad x={137.500} y={480.500 + i * 8.1} />
        <Pad x={186.500} y={480.500 + i * 8.1} />
      </g>
    ))}
    <Cross x={161.500} y={521.500} r={4.500} />
    <path d="M224 577.500H245M234.500 567V594" stroke="#000" strokeDasharray="1 1" />
  </BoardCanvas>
);

const FloatingBar = () => (
  <FloatingTools role="toolbar" aria-label="View tools">
    <FloatButton aria-label="Information">
      <Icon size={16} box={16}>
        <circle cx="8" cy="8" r="7" fill="#1f7fd0" />
        <path d="M8 7V12M8 3.500V5.500" stroke="#fff" strokeWidth="2" />
      </Icon>
    </FloatButton>
    <FloatButton aria-label="Visibility">
      <Icon size={18} box={18}>
        <path d="M1.500 9C4.500 3 13.500 3 16.500 9C13.500 15 4.500 15 1.500 9Z" stroke="#666" strokeWidth="1.200" fill="#eee" />
        <circle cx="9" cy="9" r="3.200" fill="#555" />
      </Icon>
    </FloatButton>
    <FloatButton aria-label="Zoom in">
      <Lens><path d="M4.500 7.500H10.500M7.500 4.500V10.500" stroke="#444" strokeWidth="1.200" /></Lens>
    </FloatButton>
    <FloatButton aria-label="Zoom out">
      <Lens><path d="M4.500 7.500H10.500" stroke="#444" strokeWidth="1.200" /></Lens>
    </FloatButton>
    <FloatButton aria-label="Zoom to fit">
      <Lens><rect x="4.500" y="5.500" width="6" height="4" stroke="#444" strokeWidth="1.200" /></Lens>
    </FloatButton>
    <FloatButton aria-label="Grid">
      <Icon size={16} box={16}>
        <path d="M3.500 0V16M8 0V16M12.500 0V16M0 3.500H16M0 8H16M0 12.500H16" stroke="#555" strokeWidth="1.200" />
      </Icon>
    </FloatButton>
    <FloatButton aria-label="Origin">
      <Icon size={16} box={16}>
        <path d="M8 0V5.500M8 10.500V16M0 8H5.500M10.500 8H16M6.500 8H9.500M8 6.500V9.500" stroke="#555" strokeWidth="1.200" />
      </Icon>
    </FloatButton>
    <FloatButton aria-label="Stop">
      <Icon size={16} box={16}>
        <circle cx="8" cy="8" r="8" fill="#ee2f38" />
        <path d="M3.500 8H12.500" stroke="#fff" strokeWidth="2" />
      </Icon>
    </FloatButton>
    <FloatButton $active aria-label="Group select">
      <MarqueeIcon size={18} />
    </FloatButton>
    <FloatButton $wide aria-label="Route options">
      <svg width="24" height="18" viewBox="0 0 24 18" fill="none" aria-hidden="true">
        <path d="M3.500 1V16M0 5.500H10C15.500 5.500 15.500 12.500 10 12.500H3.500" stroke="#555" strokeWidth="1.200" />
        <path d="M0 9H13" stroke={SKY} strokeWidth="2" />
        <path d="M18 7H24L21 11.500Z" fill="#333" />
      </svg>
    </FloatButton>
  </FloatingTools>
);

const LabelText = ({ text }: { text: string }) => (
  <>
    <u>{text[0]}</u>
    {text.slice(1)}
  </>
);

const App = () => (
  <>
    <GlobalStyle />
    <Window>
      <MenuBar aria-label="Main">
        {menus.map((m, i) => (
          <MenuLink key={m} href="#" $active={i === 0}>
            {m}
          </MenuLink>
        ))}
      </MenuBar>
      <Ribbon role="toolbar" aria-label="Ribbon">
        {groups.map((g) => (
          <Group key={g.label} $width={g.width}>
            <ToolRow>
              {g.tools.map(([name, icon]) => (
                <ToolButton key={name} type="button" aria-label={name}>
                  {icon}
                </ToolButton>
              ))}
            </ToolRow>
            <GroupMenu type="button">
              {g.label}
              <Caret h={4} />
            </GroupMenu>
          </Group>
        ))}
        <Group $width={74} $last>
          <ToolRow>
            <SelectTool type="button" aria-label="Group select">
              <MarqueeIcon />
            </SelectTool>
          </ToolRow>
          <GroupMenu type="button">
            SELECT
            <Caret h={4} />
          </GroupMenu>
        </Group>
      </Ribbon>

      <Workspace>
        <LeftPanel>
          <DockTabs>
            <DockTab type="button" $width={158}>PLACE COMPONENTS</DockTab>
            <DockTab type="button" $width={139} $active>DESIGN MANAGER</DockTab>
            <DockTail />
          </DockTabs>
          <SubTabs>
            <SubTab type="button" $active>Browser</SubTab>
            <SubTab type="button">Filter</SubTab>
            <Spacer />
            <SquareButton type="button" aria-label="Select on canvas">
              <Icon size={16} box={16}>
                <rect x="1.500" y="1.500" width="7" height="7" stroke="#666" />
                <path d="M9 6L14.500 11.500H12L13.500 15L12 15.500L10.500 12.500L9 14Z" fill="#000" />
              </Icon>
            </SquareButton>
            <SquareButton type="button" aria-label="Zoom to selection">
              <Lens><path d="M5.500 3.500L10.500 8.500H8L7 11L5.500 9Z" fill="#fff" stroke="#777" strokeWidth="0.800" /></Lens>
            </SquareButton>
          </SubTabs>
          <ViewRow>
            <ViewLabel htmlFor="view">View</ViewLabel>
            <Combo>
              <BareSelect id="view" defaultValue="Devices">
                <option>Devices</option>
              </BareSelect>
              <Drop />
            </Combo>
            <HelpButton type="button" aria-label="Help">
              <svg width="16" height="16" viewBox="0 0 16 16" fill="none" aria-hidden="true">
                <circle cx="8" cy="8" r="7.400" stroke="#666" fill="#f6f6f6" />
                <path d="M5.700 6.200C5.700 3 10.400 3.200 10.400 6C10.400 7.600 8 7.800 8 9.600M8 11V12.500" stroke="#555" strokeWidth="1.400" />
              </svg>
            </HelpButton>
          </ViewRow>

          <ListSection title="Device Sets" summary="3 of 3 shown (1 selected)">
            <TableBody>
              <Table>
                <thead>
                  <tr>
                    <Th scope="col">
                      <Sorted />
                      Device Set
                    </Th>
                  </tr>
                </thead>
                <tbody>
                  {deviceSets.map((d, i) => (
                    <Tr key={d} $tone={i === 0 ? "selected" : i === 1 ? "alt" : undefined}>
                      <Td>{d}</Td>
                    </Tr>
                  ))}
                </tbody>
              </Table>
            </TableBody>
          </ListSection>

          <ListSection title="Devices" summary="3 of 3 shown (0 selected)">
            <TableBody>
              <Table $width="516px">
                <colgroup>
                  <col width="41" />
                  <col width="137" />
                  <col width="137" />
                  <col width="37" />
                  <col width="37" />
                  <col width="51" />
                  <col width="76" />
                </colgroup>
                <thead>
                  <tr>
                    <Th scope="col" $divider>
                      <Sorted />
                      Name
                    </Th>
                    {["Footprint", "Value", "Side", "Pins", "Locked", "Location"].map((h) => (
                      <Th key={h} scope="col" $divider>
                        {h}
                      </Th>
                    ))}
                  </tr>
                </thead>
                <tbody>
                  {devices.map((d, i) => (
                    <Tr key={d.name} $tone={i === 1 ? "alt" : undefined}>
                      <Td>{d.name}</Td>
                      <Td>{d.footprint}</Td>
                      <Td>{d.value}</Td>
                      <Td>{d.side}</Td>
                      <Td $align="right">{d.pins}</Td>
                      <Td $align="center">
                        <TinyCheck type="checkbox" aria-label={`${d.name} locked`} />
                      </Td>
                      <Td $align="right">{d.location}</Td>
                    </Tr>
                  ))}
                </tbody>
              </Table>
            </TableBody>
            <ScrollTrack>
              <ScrollThumb $share={81} />
            </ScrollTrack>
          </ListSection>

          <ListSection title="Items" summary="0 of 0 shown (0 selected)">
            <TableBody>
              <Table $width="500px">
                <thead>
                  <tr>
                    <Th scope="col" $divider>
                      <Sorted />
                      Type
                    </Th>
                    {["Name", "Signal", "Layer", "Size (mil)"].map((h) => (
                      <Th key={h} scope="col" $divider>
                        {h}
                      </Th>
                    ))}
                  </tr>
                </thead>
              </Table>
            </TableBody>
            <ScrollTrack>
              <ScrollThumb $share={57} />
            </ScrollTrack>
          </ListSection>
        </LeftPanel>

        <Center>
          <CommandBar>
            <LayerPicker>
              <Combo>
                <BoxSwatch $size={20} $color="#d9405e" />
                <BareSelect aria-label="Active layer" $pad={6} defaultValue="1 Top">
                  <option>1 Top</option>
                </BareSelect>
                <Drop />
              </Combo>
            </LayerPicker>
            <Coordinates>50 mil (-2775 3817)</Coordinates>
            <Combo $fill="#f2f2f2">
              <CommandInput $pad={6} aria-label="Command line" placeholder="Click or press Slash to activate command line mode" />
              <Drop />
            </Combo>
          </CommandBar>
          <CanvasGrid>
            <BoardDrawing />
            <VerticalBar>
              <BarThumb />
            </VerticalBar>
            <HorizontalBar>
              <BarThumb />
            </HorizontalBar>
            <WarningButton type="button" aria-label="Warnings">
              <Icon size={16} box={16}>
                <path d="M8 1L15.500 15H0.500Z" fill="#ffe02e" stroke="#7a6a10" />
                <path d="M8 5.500V10.500M8 12V13.700" stroke="#222" strokeWidth="1.600" />
              </Icon>
            </WarningButton>
            <FloatingBar />
          </CanvasGrid>
          <StatusBar>Left-click &amp; drag to define group</StatusBar>
        </Center>

        <RightPanel>
          <PanelBar title="INSPECTOR" />
          <Inspector>
            <Fold title="Properties of Line" />
            <Form>
              <Field>
                <FieldLabel htmlFor="from-x">From</FieldLabel>
                <Combo>
                  <Marker width="80" height="24" aria-hidden="true">
                    <path d="M2 6L14 5L33 4V8H47V9H73V23H33L4 24Z" fill="#ffe600" />
                  </Marker>
                  <BareInput id="from-x" defaultValue="6500" />
                </Combo>
                <Combo>
                  <Marker width="80" height="24" aria-hidden="true">
                    <path d="M0 4L24 4L41 1V19L21 20L0 19Z" fill="#ffe600" />
                  </Marker>
                  <BareInput aria-label="From Y" defaultValue="6500" />
                </Combo>
              </Field>
              <Field>
                <FieldLabel htmlFor="to-x">To</FieldLabel>
                <Combo>
                  <BareInput id="to-x" defaultValue="0" />
                </Combo>
                <Combo>
                  <BareInput aria-label="To Y" defaultValue="3937.00787" />
                </Combo>
              </Field>
              <Field>
                <FieldLabel htmlFor="length">Length</FieldLabel>
                <Combo>
                  <BareInput id="length" $dim readOnly value="6299.2126" />
                </Combo>
              </Field>
              <Field>
                <FieldLabel htmlFor="angle">Angle</FieldLabel>
                <Combo>
                  <BareInput id="angle" $dim readOnly value="180" />
                </Combo>
              </Field>
              <Field>
                <FieldLabel htmlFor="width"><LabelText text="Width" /></FieldLabel>
                <Combo>
                  <BareSelect id="width" $pad={6} defaultValue="0">
                    <option>0</option>
                  </BareSelect>
                  <Drop />
                </Combo>
              </Field>
              <Field>
                <FieldLabel htmlFor="style"><LabelText text="Style" /></FieldLabel>
                <Combo>
                  <BareSelect id="style" defaultValue="continuous">
                    <option>continuous</option>
                  </BareSelect>
                  <Drop />
                </Combo>
              </Field>
              <Field>
                <FieldLabel htmlFor="cap"><LabelText text="Cap" /></FieldLabel>
                <Combo>
                  <BareSelect id="cap" $dim defaultValue="round">
                    <option>round</option>
                  </BareSelect>
                  <Drop />
                </Combo>
              </Field>
              <Field>
                <FieldLabel htmlFor="layer"><LabelText text="Layer" /></FieldLabel>
                <Combo>
                  <BoxSwatch $size={20} $color="#55a870" />
                  <BareSelect id="layer" $pad={10} defaultValue="20 Dimension">
                    <option>20 Dimension</option>
                  </BareSelect>
                  <Drop />
                </Combo>
              </Field>
              <Field>
                <FieldLabel htmlFor="curve">Curve</FieldLabel>
                <Combo>
                  <BareInput id="curve" defaultValue="0" />
                </Combo>
              </Field>
              <CheckField>
                <FieldLabel htmlFor="locked">Locked</FieldLabel>
                <CheckBox id="locked" type="checkbox" />
              </CheckField>
            </Form>
            <Fold title="Quick Actions" />
            <DeleteAction type="button" aria-label="Delete">
              <DeleteIcon size={12} weight={9} />
            </DeleteAction>
          </Inspector>

          <PanelBar title="SELECTION FILTER" />
          <FilterBody>
            <ListLabel>Types</ListLabel>
            <ListFrame $height={150}>
              <BlueList>
                {types.map(([name, drawing]) => (
                  <BlueItem key={name}>
                    <Icon size={16} box={16}>{drawing}</Icon>
                    {name}
                  </BlueItem>
                ))}
              </BlueList>
              <ListScroll>
                <ListThumb $share={47} />
              </ListScroll>
            </ListFrame>
            <ListLabel $tall>Layers</ListLabel>
            <ListFrame $height={80}>
              <PresetList>
                {presets.map((p) => (
                  <PresetItem key={p}>{p}</PresetItem>
                ))}
              </PresetList>
            </ListFrame>
            <ListFrame $height={108}>
              <BlueList>
                {layers.map(([name, color]) => (
                  <BlueItem key={name}>
                    <Swatch $size={16} $color={color} />
                    {name}
                  </BlueItem>
                ))}
              </BlueList>
              <ListScroll>
                <ListThumb $share={29} />
              </ListScroll>
            </ListFrame>
            <FilterFoot>
              <ResetButton type="button">Reset</ResetButton>
            </FilterFoot>
          </FilterBody>
        </RightPanel>
      </Workspace>
    </Window>
  </>
);

export default App;
